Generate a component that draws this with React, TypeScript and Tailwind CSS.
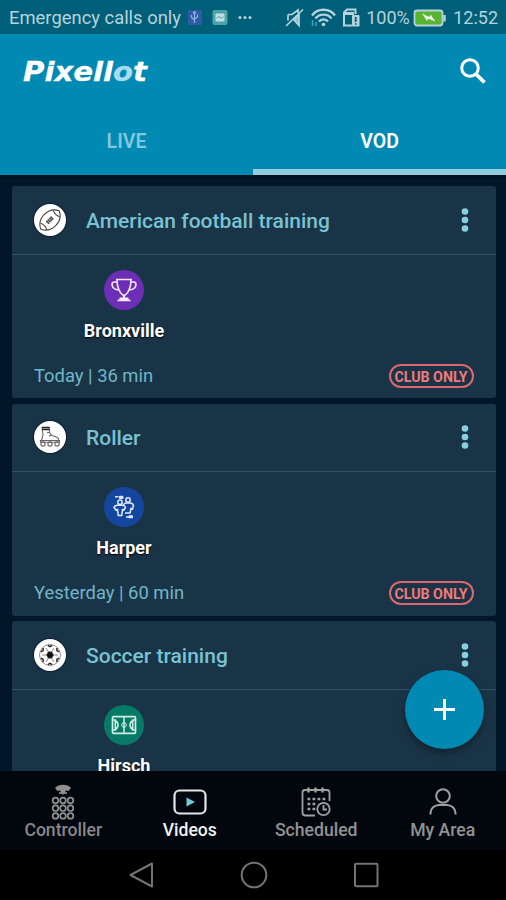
import type { ReactNode } from 'react'

interface Video {
  title: string
  team: string
  meta?: string
  teamBg: string
  sportIcon: ReactNode
  teamIcon: ReactNode
}

function FootballIcon() {
  return (
    <svg width="24" height="24" viewBox="0 0 24 24" fill="none" stroke="#444" strokeWidth="1.1" aria-hidden="true">
      <g transform="rotate(-45 12 12)">
        <path d="M-1 12C1.5 6.5 6.500 4 12 4S22.500 6.500 25 12C22.500 17.500 17.500 20 12 20S1.500 17.500-1 12Z" />
        <path d="M2.800 7.500C4.300 10.200 4.300 13.800 2.800 16.500M21.200 7.500C19.700 10.200 19.700 13.800 21.200 16.500" />
        <path d="M8 12h8" strokeWidth="4" strokeDasharray="1.500 .5" />
      </g>
    </svg>
  )
}

function SkateIcon() {
  return (
    <svg width="22" height="22" viewBox="0 0 22 22" fill="none" stroke="#666" strokeWidth="1.1" aria-hidden="true">
      <path d="M3 1.500h7.500v5l2.500 3 4.500 1.500c1.800.7 2.200 1.700 2 3.500H2.500L4 9Z" />
      <path d="M3 1.500h7.500M3.300 3.600h7" stroke="#222" strokeWidth="1.500" />
      <path d="M10.500 6.500H8M12 9l-2 1.200M1.500 14.500h19v1.800h-19z" />
      <circle cx="4" cy="18" r="2.100" />
      <circle cx="11" cy="18" r="2.100" />
      <circle cx="18" cy="18" r="2.100" />
    </svg>
  )
}

function SoccerIcon() {
  return (
    <svg width="24" height="24" viewBox="0 0 22 22" fill="none" stroke="#555" strokeWidth=".6" aria-hidden="true">
      <circle cx="11" cy="11" r="9.600" />
      <path d="M14.300 11 12.600 13.900H9.400L7.700 11 9.400 8.100h3.200Z" fill="#111" />
      <path d="M14.300 11h4M12.600 13.900l2 3.500M9.400 13.900l-2 3.500M7.700 11h-4M9.400 8.100l-2-3.500M12.600 8.100l2-3.500" />
      <path d="M9 2.200 11 3.400l2-1.200M9 19.800l2-1.200 2 1.200M19.300 8.200l-2-1.300v-2.400M2.700 8.200l2-1.300V4.500M19.300 13.800l-2 1.300v2.400M2.700 13.800l2 1.300v2.400" stroke="#222" strokeWidth="1.300" />
    </svg>
  )
}

function TrophyIcon() {
  return (
    <svg width="26" height="24" viewBox="0 0 26 24" fill="none" stroke="#f3e8ff" strokeWidth="1.600" aria-hidden="true">
      <path d="M5 1.500h16M6 1.500c0 7 1.500 12 5.700 15.500h2.600C18.500 13.500 20 8.500 20 1.500" />
      <path d="M6 4H3C0 4.500 1 8.500 2.500 10c1.300 1.300 3 1.800 5 2M20 4h3c3 .5 2 4.500.5 6-1.300 1.300-3 1.800-5 2" />
      <path d="M13 17v3" strokeWidth="2.200" />
      <path d="M8.500 20.500h9M6.500 22.300h13" strokeWidth="1.800" />
    </svg>
  )
}

function PlayersIcon() {
  return (
    <svg width="24" height="24" viewBox="0 0 24 24" fill="none" stroke="#dfeaff" strokeWidth="1.500" aria-hidden="true">
      <path d="M3 1.800h3.500M14 22h3" />
      <path d="M7.500 1.300h3.500v2.200H7.500zM17 20.800h3.500v2H17z" fill="#dfeaff" strokeWidth="1" />
      <circle cx="8" cy="7.300" r="2.200" />
      <circle cx="16" cy="5" r="2.200" />
      <path d="M2 12.500c.5-1.500 2-2.300 3.500-2.300h5c1.500 0 2.500.8 3 2.300L12 15l-1.500-.5-.8 6H6.300l-.8-6L4 15Z" />
      <path d="M11.500 9.800c.7-1.300 1.500-1.800 3-1.800h3.500c2 0 3 1 3.500 2.500L20.500 14l-1.500-.5-1 4.500h-5" />
    </svg>
  )
}

function PitchIcon() {
  return (
    <svg width="26" height="20" viewBox="0 0 26 20" fill="none" stroke="#cfeee4" strokeWidth="1.500" aria-hidden="true">
      <rect x="1.500" y="1.700" width="23" height="16.600" rx="1" strokeWidth="1.700" />
      <path d="M13 2v16M1.500 5h2.800v10H1.500M24.500 5h-2.800v10h2.800M4 5.500c4 1.500 4 7.500 0 9M22 5.500c-4 1.500-4 7.500 0 9" />
      <circle cx="13" cy="10" r="2.300" strokeWidth="1" />
    </svg>
  )
}

const VIDEOS: Video[] = [
  {
    title: 'American football training',
    team: 'Bronxville',
    meta: 'Today | 36 min',
    teamBg: 'bg-[#6b2eb5]',
    sportIcon: <FootballIcon />,
    teamIcon: <TrophyIcon />,
  },
  {
    title: 'Roller',
    team: 'Harper',
    meta: 'Yesterday | 60 min',
    teamBg: 'bg-[#1446a0]',
    sportIcon: <SkateIcon />,
    teamIcon: <PlayersIcon />,
  },
  {
    title: 'Soccer training',
    team: 'Hirsch',
    teamBg: 'bg-[#087a68]',
    sportIcon: <SoccerIcon />,
    teamIcon: <PitchIcon />,
  },
]

function StatusBar() {
  return (
    <div className="flex h-[34px] shrink-0 items-center bg-[#005f78] pl-[9px] pr-2 text-[18px] leading-none text-[#b5d3dd]">
      <span className="w-[179px] whitespace-nowrap pt-[2px] text-[18.4px]">Emergency calls only</span>
      <svg width="70" height="34" viewBox="0 0 70 34" aria-hidden="true">
        <rect x="-1" y="10" width="15" height="15" rx="1" fill="#2f5aa5" />
        <path d="M6.500 12v11M3.500 15v2.500l3 2.500M9.500 14.500V17l-3 2M5 13.500l1.500-2 1.500 2" stroke="#8fb5dc" strokeWidth="1.200" fill="none" />
        <rect x="24.500" y="10" width="15" height="15" rx="2" fill="#4ba3a9" />
        <rect x="27.500" y="13.500" width="9" height="8" rx="1" fill="#c2e0e3" />
        <path d="m28.500 18.500 2.500-2 2 1.800 2.500-1.500" stroke="#4ba3a9" fill="none" />
        <g fill="#b5d3dd">
          <circle cx="52" cy="17.500" r="1.500" />
          <circle cx="57" cy="17.500" r="1.500" />
          <circle cx="62" cy="17.500" r="1.500" />
        </g>
      </svg>
      <svg className="ml-auto shrink-0" width="80" height="34" viewBox="0 0 80 34" fill="none" stroke="#b5d3dd" strokeWidth="1.700" aria-hidden="true">
        <path d="M3 26 20 9.500" />
        <path d="M5 14.500h4l6-4.500v3M5 14.500v6" />
        <path d="m11 20 5 5.500V14Z" fill="#8fbccb" />
        <path d="M29 15.500C34.500 7.800 46.500 7.800 52 15.500M32.500 18.500c3.800-5.200 12.200-5.200 16 0M36 21.500c2.200-2.800 6.800-2.800 9 0" strokeWidth="2.300" />
        <circle cx="40.500" cy="24.500" r="1.800" fill="#b5d3dd" stroke="none" />
        <path d="M29.500 20v6M33 22v4" stroke="#36a7b4" strokeWidth="1.500" />
        <path d="M69 25.500h-8V12.500L64 9.500h8.500V14" strokeWidth="2" />
        <path d="M62 13.500h9" strokeWidth="3" />
        <rect x="69" y="15" width="7.500" height="11.500" rx="1" fill="#b5d3dd" stroke="none" />
        <path d="M72.700 17v5M72.700 23.200v1.500" stroke="#005f78" strokeWidth="1.800" />
      </svg>
      <span className="w-[50px] whitespace-nowrap pt-[2px] text-center">100%</span>
      <svg className="shrink-0" width="34" height="34" viewBox="0 0 34 34" aria-hidden="true">
        <rect x="1.500" y="10.500" width="28" height="15" rx="2.500" fill="#58b52f" stroke="#b5d3dd" strokeWidth="1.800" />
        <path d="M31.500 15v6.500" stroke="#b5d3dd" strokeWidth="2.500" />
        <path d="m9 13.500 7.500 3.500 1-2.500 5 7-7.500-2.800-1 2.300Z" fill="#e3f5e6" />
      </svg>
      <span className="w-[51px] whitespace-nowrap pt-[2px] text-right">12:52</span>
    </div>
  )
}

function Header() {
  return (
    <header className="h-[141px] shrink-0 bg-[#0089b2]">
      <div className="flex h-[75px] items-center justify-between pl-[22px] pr-[19px]">
        <svg width="128" height="34" viewBox="0 0 128 34" role="img" aria-label="Pixellot">
          <text
            x="1"
            y="26"
            textLength="124"
            lengthAdjust="spacingAndGlyphs"
            className="fill-white stroke-white font-['DejaVu_Sans'] text-[26px] font-bold italic"
            strokeWidth=".3"
          >
            Pixell<tspan className="fill-[#a5dcee] stroke-[#a5dcee]">o</tspan>t
          </text>
        </svg>
        <svg width="28" height="28" viewBox="0 0 28 28" fill="none" stroke="#fff" strokeWidth="3" aria-label="Search">
          <circle cx="11" cy="10" r="8.300" />
          <path d="m17 16 8.500 8.500" strokeWidth="3.800" />
        </svg>
      </div>
      <nav className="grid h-[66px] grid-cols-2 text-[19.5px] font-semibold leading-none">
        <button className="flex items-center justify-center text-[#82c8dc]">LIVE</button>
        <button className="flex items-center justify-center border-b-[6px] border-[#90cddd] pt-[6px] text-white">VOD</button>
      </nav>
    </header>
  )
}

function VideoCard({ video }: { video: Video }) {
  return (
    <article className="h-[212px] shrink-0 rounded-[3px] bg-[#1a3447]">
      <div className="flex h-[68.9px] items-center border-b border-[#2e5264] pl-[22px] pr-[27.5px]">
        <span className="flex size-8 items-center justify-center rounded-full bg-white shadow-[0_0_1px_1px_rgba(2,16,40,0.6)]">
          {video.sportIcon}
        </span>
        <h2 className="ml-5 whitespace-nowrap pt-[3px] text-[21px] font-medium leading-none text-[#78c2d2]">{video.title}</h2>
        <svg className="ml-auto" width="8" height="26" viewBox="0 0 8 26" fill="#86d0df" aria-hidden="true">
          <circle cx="4" cy="4.500" r="3.300" />
          <circle cx="4" cy="13" r="3.300" />
          <circle cx="4" cy="21.500" r="3.300" />
        </svg>
      </div>
      <div className="ml-[22px] flex w-[180px] flex-col items-center pt-[15px]">
        <span className={`flex size-10 items-center justify-center rounded-full ${video.teamBg}`}>{video.teamIcon}</span>
        <span className="mt-[10px] text-[18px] font-bold leading-[22px] text-white [text-shadow:0_1px_2px_#000]">{video.team}</span>
      </div>
      {video.meta && (
        <div className="flex items-center justify-between pl-[22px] pr-[22.5px] pt-[22px]">
          <span className="text-[18.4px] leading-6 text-[#70b6c9]">{video.meta}</span>
          <span className="flex h-[24px] w-[85px] items-center justify-center whitespace-nowrap rounded-full border-2 border-[#dc686d] pt-[2px] text-[14.2px] font-bold leading-none text-[#f0797c]">
            CLUB ONLY
          </span>
        </div>
      )}
    </article>
  )
}

function ControllerIcon() {
  const dots = [0, 1, 2].flatMap((row) => [0, 1, 2].map((col) => ({ cx: 4.5 + col * 7.5, cy: 17.5 + row * 7.7 })))
  return (
    <svg width="24" height="37" viewBox="0 0 24 37" fill="none" stroke="#919191" strokeWidth="1.700" aria-hidden="true">
      <path d="M4 5C8 .8 16 .8 20 5l-2.500 3-2.500-.5-3 4.500-3-4.500L6.500 8Z" fill="#919191" stroke="none" />
      <path d="M8 10h8" />
      {dots.map((dot) => (
        <circle key={`${dot.cx}-${dot.cy}`} cx={dot.cx} cy={dot.cy} r="2.800" />
      ))}
    </svg>
  )
}

function VideosIcon() {
  return (
    <svg width="34" height="37" viewBox="0 0 34 37" aria-hidden="true">
      <rect x="1.500" y="7.500" width="31" height="23" rx="5" fill="none" stroke="#e6e6e6" strokeWidth="2.200" />
      <path d="M13.500 14.500v9l8.500-4.500Z" fill="#72cbdc" />
    </svg>
  )
}

function ScheduledIcon() {
  return (
    <svg width="30" height="37" viewBox="0 0 30 37" fill="none" stroke="#a0a0a0" strokeWidth="1.800" aria-hidden="true">
      <path d="M14 32.500H4.500C2.500 32.500 1.500 31.500 1.500 29.500V9.500c0-1.500 1-2.500 2.500-2.500h22c1.500 0 2.500 1 2.500 2.500V18" />
      <path d="M7.500 4.500v5M14.500 4.500v5M21.500 4.500v5" strokeWidth="2.400" />
      <path d="M6.500 16h18M6.500 21h10M6.500 26h8" strokeWidth="2.500" strokeDasharray="2.800 2.200" />
      <circle cx="22.500" cy="26" r="6.200" />
      <path d="M22.500 22v4.500h3.500" />
    </svg>
  )
}

function PersonIcon() {
  return (
    <svg width="30" height="37" viewBox="0 0 30 37" fill="none" stroke="#a0a0a0" strokeWidth="2" aria-hidden="true">
      <circle cx="15" cy="13" r="6.800" />
      <path d="M2.500 31.500V30c0-4.500 4-8 8.500-8h8c4.500 0 8.500 3.500 8.500 8v1.500" />
    </svg>
  )
}

const NAV_ITEMS = [
  { label: 'Controller', icon: <ControllerIcon />, color: 'text-[#888888]' },
  { label: 'Videos', icon: <VideosIcon />, color: 'text-[#f2f2f2]' },
  { label: 'Scheduled', icon: <ScheduledIcon />, color: 'text-[#929292]' },
  { label: 'My Area', icon: <PersonIcon />, color: 'text-[#929292]' },
]

function BottomNav() {
  return (
    <nav className="grid h-[79px] shrink-0 grid-cols-4 bg-[#02070d]">
      {NAV_ITEMS.map((item) => (
        <button key={item.label} className={`flex flex-col items-center pt-3 text-[17.6px] font-medium leading-[21px] ${item.color}`}>
          {item.icon}
          <span className="whitespace-nowrap">{item.label}</span>
        </button>
      ))}
    </nav>
  )
}

function SystemNav() {
  return (
    <div className="flex h-[50px] shrink-0 items-center justify-between bg-black pl-[128px] pr-[127px]">
      <svg width="26" height="28" viewBox="0 0 26 28" fill="none" stroke="#737373" strokeWidth="2" strokeLinejoin="round" aria-hidden="true">
        <path d="M24 2.500v23L2.500 14Z" />
      </svg>
      <svg width="28" height="28" viewBox="0 0 28 28" fill="none" stroke="#737373" strokeWidth="2" aria-hidden="true">
        <circle cx="14" cy="14" r="12.300" />
      </svg>
      <svg width="26" height="28" viewBox="0 0 26 28" fill="none" stroke="#737373" strokeWidth="2" aria-hidden="true">
        <rect x="2" y="2.700" width="22.500" height="22.500" rx="1" />
      </svg>
    </div>
  )
}

export default function App() {
  return (
    <div className="relative flex h-[900px] w-[506px] flex-col overflow-hidden bg-[#02162a] font-['Roboto',sans-serif]">
      <StatusBar />
      <Header />
      <main className="flex h-[596px] shrink-0 flex-col gap-[5.5px] overflow-hidden border-t-2 border-[#02111f] pl-3 pr-[10px] pt-[9px]">
        {VIDEOS.map((video) => (
          <VideoCard key={video.title} video={video} />
        ))}
      </main>
      <BottomNav />
      <SystemNav />
      <button
        aria-label="Add"
        className="absolute bottom-[151.5px] right-[22px] flex size-[79px] items-center justify-center rounded-full bg-[#0089b2] shadow-[0_4px_8px_rgba(0,0,0,0.35)]"
      >
        <svg width="21" height="21" viewBox="0 0 21 21" stroke="#fff" strokeWidth="3" aria-hidden="true">
          <path d="M10.500 0v21M0 10.500h21" />
        </svg>
      </button>
    </div>
  )
}
